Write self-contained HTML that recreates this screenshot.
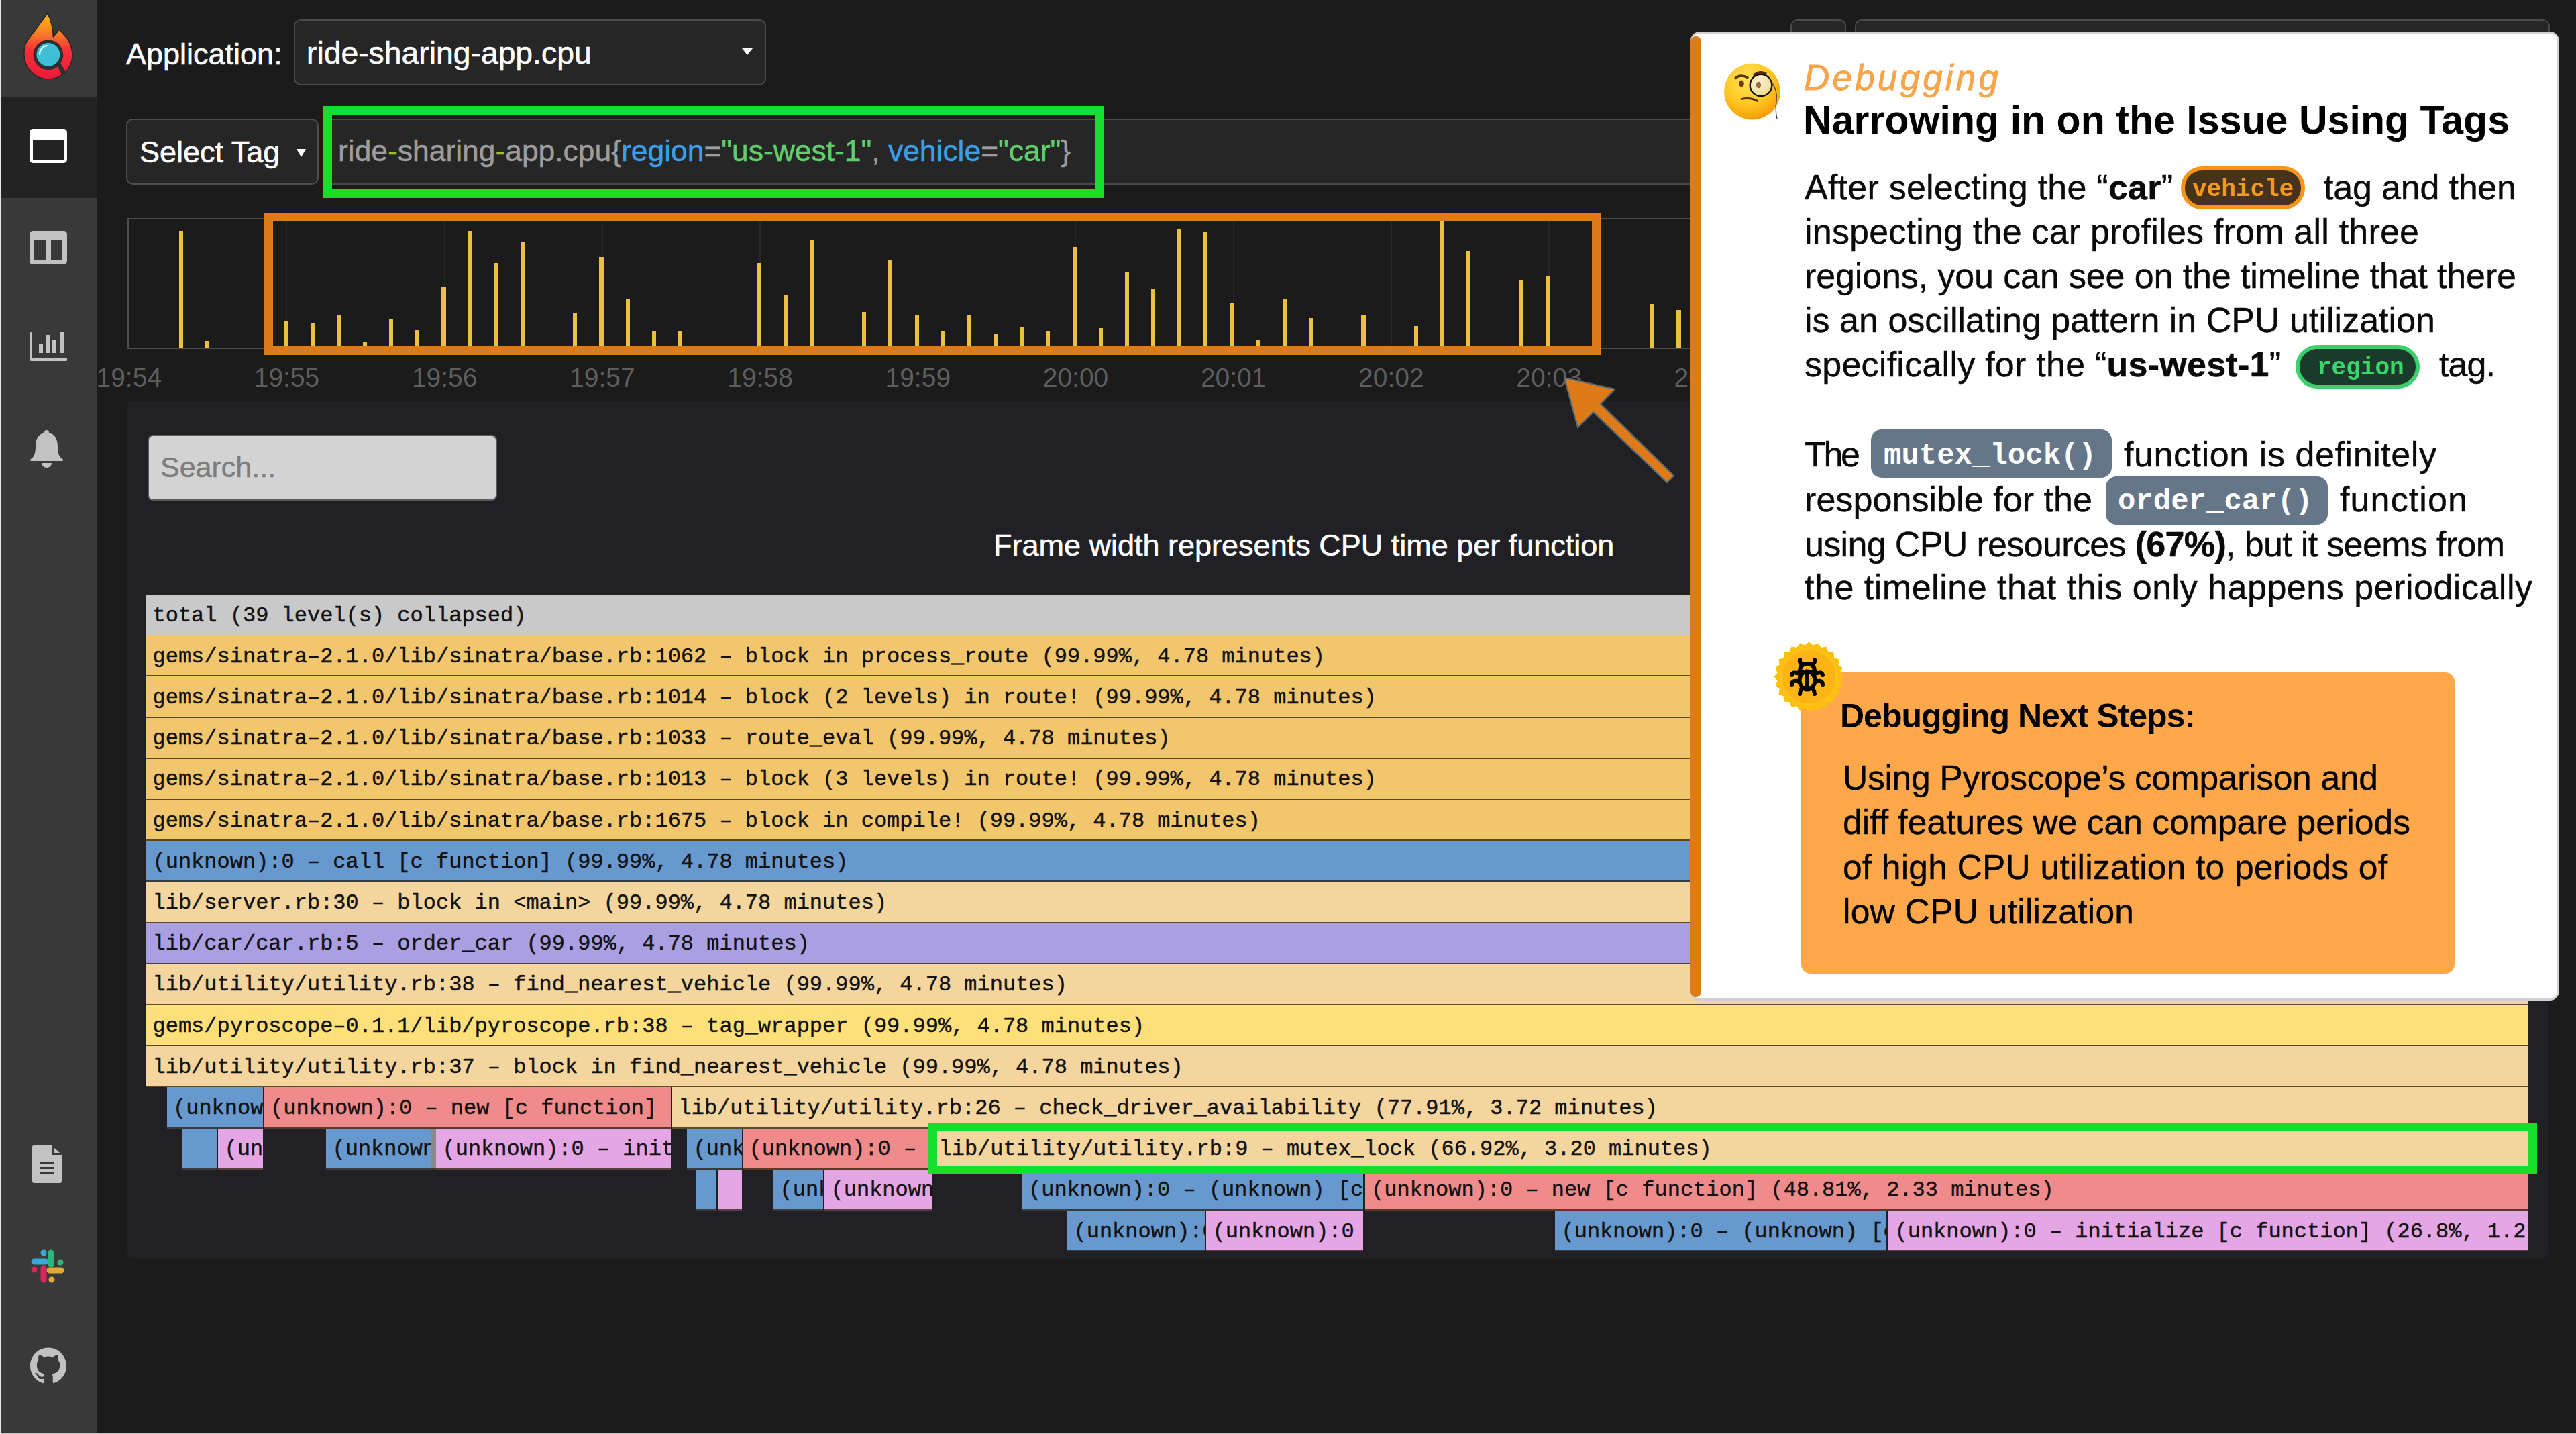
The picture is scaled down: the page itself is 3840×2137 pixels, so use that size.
<!DOCTYPE html><html><head><meta charset="utf-8"><style>
html,body{margin:0;padding:0;width:3840px;height:2137px;overflow:hidden;background:#1b1b1b;font-family:'Liberation Sans', sans-serif}
b{font-weight:bold}
</style></head><body>
<div style="position:absolute;left:0.0px;top:0.0px;width:144.0px;height:2137.0px;background:#393939"></div><div style="position:absolute;left:0.0px;top:144.0px;width:144.0px;height:151.0px;background:#232323"></div><svg style="position:absolute;left:0;top:0" width="144" height="144" viewBox="0 0 144 144">
<defs><linearGradient id="fl" x1="0" y1="20" x2="0" y2="118" gradientUnits="userSpaceOnUse"><stop offset="0" stop-color="#ffbb10"/><stop offset="0.33" stop-color="#f8772a"/><stop offset="0.55" stop-color="#fc2f38"/><stop offset="1" stop-color="#ec1a3a"/></linearGradient></defs>
<path d="M71 20 L41 60 C37 66 35.5 74 35.9 82 C36.5 102 52 118 72 118 C92 118 108 102 108 82 C108 72 104.5 64 100 57 L88.2 44 L79.4 55 C79 44 76 30 71 20 Z" fill="url(#fl)" stroke="#262626" stroke-width="1.6" stroke-linejoin="round"/>
<circle cx="71.9" cy="81.8" r="22.4" fill="#2f2f2f"/>
<path d="M84 95 L92 112 L97.5 106.5 L88 91 Z" fill="#2f2f2f"/>
<circle cx="71.9" cy="81.3" r="17.4" fill="#3fbfd5"/>
<path d="M59 81 A13 13 0 0 1 70 68" stroke="#eafafd" stroke-width="2.2" fill="none" stroke-linecap="round"/>
</svg><svg style="position:absolute;left:44px;top:192px" width="56" height="51" viewBox="0 0 56 51">
<rect x="0" y="0" width="56" height="51" rx="5" fill="#fff"/><rect x="5" y="17" width="46" height="29" fill="#232323"/></svg><svg style="position:absolute;left:44px;top:344px" width="56" height="50" viewBox="0 0 56 50">
<rect x="0" y="0" width="56" height="50" rx="5" fill="#c2c2c2"/><rect x="7" y="14" width="17" height="29" fill="#393939"/><rect x="32" y="14" width="17" height="29" fill="#393939"/></svg><svg style="position:absolute;left:44px;top:495px" width="56" height="44" viewBox="0 0 56 44">
<path d="M0 2 a2 2 0 0 1 4 0 V38 H54 a2.5 2.5 0 0 1 0 5 H3 a3 3 0 0 1 -3 -3 Z" fill="#c2c2c2"/>
<rect x="14" y="17" width="6" height="14" fill="#c2c2c2"/><rect x="24" y="4" width="6" height="27" fill="#c2c2c2"/><rect x="34" y="11" width="6" height="20" fill="#c2c2c2"/><rect x="45" y="0" width="6" height="31" fill="#c2c2c2"/></svg><svg style="position:absolute;left:45px;top:641px" width="50" height="56" viewBox="0 0 50 56">
<circle cx="24.5" cy="3.5" r="3.5" fill="#c2c2c2"/>
<path d="M24.5 4 C12 4 8 14 8 24 C8 34 6 40 1 43 C-1 44.5 0 46 2 46 H47 C49 46 50 44.5 48 43 C43 40 41 34 41 24 C41 14 37 4 24.5 4 Z" fill="#c2c2c2"/>
<path d="M17 49 a7.5 7 0 0 0 15 0 Z" fill="#c2c2c2"/></svg><svg style="position:absolute;left:48px;top:1707px" width="44" height="56" viewBox="0 0 44 56">
<path d="M2 0 H29 L44 14 V53 a3 3 0 0 1 -3 3 H3 a3 3 0 0 1 -3 -3 V2 a2 2 0 0 1 2 -2 Z" fill="#c2c2c2"/>
<path d="M29 0 V12 a2 2 0 0 0 2 2 H44" fill="#393939"/><path d="M32 3 V11 H41 Z" fill="#c2c2c2"/>
<rect x="11" y="25" width="22" height="3" fill="#393939"/><rect x="11" y="32" width="22" height="3" fill="#393939"/><rect x="11" y="39" width="22" height="3" fill="#393939"/></svg><svg style="position:absolute;left:46px;top:1862px" width="50" height="50" viewBox="0 0 50 50">
<g stroke-linecap="round" stroke-width="9" fill="none">
<line x1="5" y1="18" x2="22" y2="18" stroke="#36a9d6"/><line x1="19" y1="5" x2="19" y2="5" stroke="#36a9d6"/>
<line x1="30" y1="5" x2="30" y2="22" stroke="#2eb67d"/><line x1="44" y1="19" x2="44" y2="19" stroke="#2eb67d"/>
<line x1="28" y1="31" x2="45" y2="31" stroke="#e0a93a"/><line x1="31" y1="45" x2="31" y2="45" stroke="#e0a93a"/>
<line x1="19" y1="28" x2="19" y2="45" stroke="#d6285a"/><line x1="5" y1="30" x2="5" y2="30" stroke="#d6285a"/>
</g></svg><svg style="position:absolute;left:45px;top:2008px" width="54" height="55" viewBox="0 0 16 16">
<path fill="#c2c2c2" d="M8 0C3.58 0 0 3.58 0 8c0 3.54 2.29 6.53 5.47 7.59.4.07.55-.17.55-.38 0-.19-.01-.82-.01-1.49-2.01.37-2.53-.49-2.69-.94-.09-.23-.48-.94-.82-1.13-.28-.15-.68-.52-.01-.53.63-.01 1.08.58 1.23.82.72 1.21 1.87.87 2.33.66.07-.52.28-.87.51-1.07-1.78-.2-3.64-.89-3.640-3.95 0-.87.31-1.59.82-2.15-.08-.2-.36-1.02.08-2.12 0 0 .67-.21 2.2.82.64-.18 1.32-.27 2-.27.68 0 1.36.09 2 .27 1.53-1.040 2.2-.82 2.2-.82.44 1.1.16 1.92.08 2.12.51.56.82 1.27.82 2.15 0 3.07-1.87 3.75-3.65 3.95.29.25.54.73.54 1.48 0 1.07-.01 1.93-.01 2.2 0 .21.15.46.55.38A8.013 8.013 0 0016 8c0-4.42-3.58-8-8-8z"/></svg><div id="app_lbl" style="position:absolute;left:188.0px;top:57.90px;font-family:'Liberation Sans', sans-serif;font-size:45px;line-height:45px;color:#fff;white-space:pre;-webkit-text-stroke:0.6px #fff;">Application:</div><div style="position:absolute;left:438.0px;top:29.0px;width:704.0px;height:98.0px;background:#262626;border:2px solid #4a4a4a;border-radius:10px;box-sizing:border-box"></div><div style="position:absolute;left:457.0px;top:55.80px;font-family:'Liberation Sans', sans-serif;font-size:46.3px;line-height:46.3px;color:#fff;white-space:pre;-webkit-text-stroke:0.6px #fff;">ride-sharing-app.cpu</div><svg style="position:absolute;left:1106px;top:72px" width="16" height="11"><path d="M0 0 H16 L8 10 Z" fill="#fff"/></svg><div style="position:absolute;left:2669.0px;top:29.0px;width:83.0px;height:91.0px;background:#262626;border:2px solid #4a4a4a;border-radius:10px;box-sizing:border-box"></div><div style="position:absolute;left:2765.0px;top:29.0px;width:1036.0px;height:91.0px;background:#262626;border:2px solid #4a4a4a;border-radius:10px;box-sizing:border-box"></div><div style="position:absolute;left:188.0px;top:177.0px;width:287.0px;height:98.0px;background:#262626;border:2px solid #4e4e4e;border-radius:10px;box-sizing:border-box"></div><div style="position:absolute;left:208.0px;top:203.90px;font-family:'Liberation Sans', sans-serif;font-size:45px;line-height:45px;color:#fff;white-space:pre;-webkit-text-stroke:0.6px #fff;">Select Tag</div><svg style="position:absolute;left:442px;top:222px" width="14" height="12"><path d="M0 0 H14 L7 12 Z" fill="#fff"/></svg><div style="position:absolute;left:484.0px;top:177.0px;width:3317.0px;height:98.0px;background:#262626;border:2px solid #4a4a4a;border-radius:2px;box-sizing:border-box"></div><div style="position:absolute;left:504.0px;top:203.41px;font-family:'Liberation Sans', sans-serif;font-size:44.4px;line-height:44.4px;color:#fff;white-space:pre;-webkit-text-stroke:0.5px currentColor;"><span style="color:#9d9d9d">ride</span><span style="color:#9cbd34">-</span><span style="color:#9d9d9d">sharing</span><span style="color:#9cbd34">-</span><span style="color:#9d9d9d">app.cpu{</span><span style="color:#3b9fe9">region</span><span style="color:#9d9d9d">=</span><span style="color:#62cf6c">"us-west-1"</span><span style="color:#9d9d9d">, </span><span style="color:#3b9fe9">vehicle</span><span style="color:#9d9d9d">=</span><span style="color:#62cf6c">"car"</span><span style="color:#9d9d9d">}</span></div><div style="position:absolute;left:482.0px;top:158.0px;width:1163.0px;height:137.0px;border:13px solid #17dd2c;box-sizing:border-box"></div><div style="position:absolute;left:190.0px;top:325.0px;width:3611.0px;height:195.0px;border:2px solid #4d4d4d;box-sizing:border-box"></div><div style="position:absolute;left:426.8px;top:327.0px;width:1.5px;height:191.0px;background:#262626"></div><div style="position:absolute;left:662.0px;top:327.0px;width:1.5px;height:191.0px;background:#262626"></div><div style="position:absolute;left:897.1px;top:327.0px;width:1.5px;height:191.0px;background:#262626"></div><div style="position:absolute;left:1132.3px;top:327.0px;width:1.5px;height:191.0px;background:#262626"></div><div style="position:absolute;left:1367.5px;top:327.0px;width:1.5px;height:191.0px;background:#262626"></div><div style="position:absolute;left:1602.8px;top:327.0px;width:1.5px;height:191.0px;background:#262626"></div><div style="position:absolute;left:1837.9px;top:327.0px;width:1.5px;height:191.0px;background:#262626"></div><div style="position:absolute;left:2073.1px;top:327.0px;width:1.5px;height:191.0px;background:#262626"></div><div style="position:absolute;left:2308.3px;top:327.0px;width:1.5px;height:191.0px;background:#262626"></div><div style="position:absolute;left:2543.5px;top:327.0px;width:1.5px;height:191.0px;background:#262626"></div><div style="position:absolute;left:2778.8px;top:327.0px;width:1.5px;height:191.0px;background:#262626"></div><div style="position:absolute;left:3013.9px;top:327.0px;width:1.5px;height:191.0px;background:#262626"></div><div style="position:absolute;left:3249.1px;top:327.0px;width:1.5px;height:191.0px;background:#262626"></div><div style="position:absolute;left:3484.3px;top:327.0px;width:1.5px;height:191.0px;background:#262626"></div><div style="position:absolute;left:3719.5px;top:327.0px;width:1.5px;height:191.0px;background:#262626"></div><div style="position:absolute;left:266.7px;top:344.0px;width:6.2px;height:174.0px;background:#eec040"></div><div style="position:absolute;left:305.9px;top:508.0px;width:6.2px;height:10.0px;background:#eec040"></div><div style="position:absolute;left:423.4px;top:478.0px;width:6.2px;height:40.0px;background:#eec040"></div><div style="position:absolute;left:462.6px;top:481.0px;width:6.2px;height:37.0px;background:#eec040"></div><div style="position:absolute;left:501.7px;top:468.6px;width:6.2px;height:49.4px;background:#eec040"></div><div style="position:absolute;left:540.9px;top:509.0px;width:6.2px;height:9.0px;background:#eec040"></div><div style="position:absolute;left:580.1px;top:475.0px;width:6.2px;height:43.0px;background:#eec040"></div><div style="position:absolute;left:619.2px;top:492.0px;width:6.2px;height:26.0px;background:#eec040"></div><div style="position:absolute;left:658.4px;top:427.0px;width:6.2px;height:91.0px;background:#eec040"></div><div style="position:absolute;left:697.6px;top:343.5px;width:6.2px;height:174.5px;background:#eec040"></div><div style="position:absolute;left:736.7px;top:391.6px;width:6.2px;height:126.4px;background:#eec040"></div><div style="position:absolute;left:775.9px;top:361.0px;width:6.2px;height:157.0px;background:#eec040"></div><div style="position:absolute;left:854.3px;top:467.0px;width:6.2px;height:51.0px;background:#eec040"></div><div style="position:absolute;left:893.4px;top:383.0px;width:6.2px;height:135.0px;background:#eec040"></div><div style="position:absolute;left:932.6px;top:444.7px;width:6.2px;height:73.3px;background:#eec040"></div><div style="position:absolute;left:971.8px;top:492.5px;width:6.2px;height:25.5px;background:#eec040"></div><div style="position:absolute;left:1010.9px;top:492.5px;width:6.2px;height:25.5px;background:#eec040"></div><div style="position:absolute;left:1128.4px;top:391.6px;width:6.2px;height:126.4px;background:#eec040"></div><div style="position:absolute;left:1167.6px;top:440.4px;width:6.2px;height:77.6px;background:#eec040"></div><div style="position:absolute;left:1206.8px;top:357.5px;width:6.2px;height:160.5px;background:#eec040"></div><div style="position:absolute;left:1285.1px;top:465.0px;width:6.2px;height:53.0px;background:#eec040"></div><div style="position:absolute;left:1324.3px;top:388.0px;width:6.2px;height:130.0px;background:#eec040"></div><div style="position:absolute;left:1363.5px;top:469.0px;width:6.2px;height:49.0px;background:#eec040"></div><div style="position:absolute;left:1402.6px;top:492.5px;width:6.2px;height:25.5px;background:#eec040"></div><div style="position:absolute;left:1441.8px;top:469.0px;width:6.2px;height:49.0px;background:#eec040"></div><div style="position:absolute;left:1481.0px;top:497.5px;width:6.2px;height:20.5px;background:#eec040"></div><div style="position:absolute;left:1520.1px;top:487.0px;width:6.2px;height:31.0px;background:#eec040"></div><div style="position:absolute;left:1559.3px;top:492.5px;width:6.2px;height:25.5px;background:#eec040"></div><div style="position:absolute;left:1598.5px;top:368.0px;width:6.2px;height:150.0px;background:#eec040"></div><div style="position:absolute;left:1637.7px;top:488.5px;width:6.2px;height:29.5px;background:#eec040"></div><div style="position:absolute;left:1676.8px;top:405.0px;width:6.2px;height:113.0px;background:#eec040"></div><div style="position:absolute;left:1716.0px;top:431.0px;width:6.2px;height:87.0px;background:#eec040"></div><div style="position:absolute;left:1755.2px;top:341.0px;width:6.2px;height:177.0px;background:#eec040"></div><div style="position:absolute;left:1794.3px;top:345.0px;width:6.2px;height:173.0px;background:#eec040"></div><div style="position:absolute;left:1833.5px;top:451.0px;width:6.2px;height:67.0px;background:#eec040"></div><div style="position:absolute;left:1872.7px;top:506.0px;width:6.2px;height:12.0px;background:#eec040"></div><div style="position:absolute;left:1911.8px;top:445.0px;width:6.2px;height:73.0px;background:#eec040"></div><div style="position:absolute;left:1951.0px;top:474.0px;width:6.2px;height:44.0px;background:#eec040"></div><div style="position:absolute;left:2029.4px;top:469.0px;width:6.2px;height:49.0px;background:#eec040"></div><div style="position:absolute;left:2107.7px;top:486.0px;width:6.2px;height:32.0px;background:#eec040"></div><div style="position:absolute;left:2146.9px;top:330.0px;width:6.2px;height:188.0px;background:#eec040"></div><div style="position:absolute;left:2186.0px;top:373.6px;width:6.2px;height:144.4px;background:#eec040"></div><div style="position:absolute;left:2264.4px;top:417.0px;width:6.2px;height:101.0px;background:#eec040"></div><div style="position:absolute;left:2303.5px;top:411.0px;width:6.2px;height:107.0px;background:#eec040"></div><div style="position:absolute;left:2460.2px;top:452.8px;width:6.2px;height:65.2px;background:#eec040"></div><div style="position:absolute;left:2499.4px;top:462.0px;width:6.2px;height:56.0px;background:#eec040"></div><div style="position:absolute;left:92.3px;top:543.0px;width:200px;text-align:center;font-family:'Liberation Sans', sans-serif;font-size:39px;line-height:39px;color:#5e5e5e">19:54</div><div style="position:absolute;left:327.5px;top:543.0px;width:200px;text-align:center;font-family:'Liberation Sans', sans-serif;font-size:39px;line-height:39px;color:#5e5e5e">19:55</div><div style="position:absolute;left:562.7px;top:543.0px;width:200px;text-align:center;font-family:'Liberation Sans', sans-serif;font-size:39px;line-height:39px;color:#5e5e5e">19:56</div><div style="position:absolute;left:797.9px;top:543.0px;width:200px;text-align:center;font-family:'Liberation Sans', sans-serif;font-size:39px;line-height:39px;color:#5e5e5e">19:57</div><div style="position:absolute;left:1033.1px;top:543.0px;width:200px;text-align:center;font-family:'Liberation Sans', sans-serif;font-size:39px;line-height:39px;color:#5e5e5e">19:58</div><div style="position:absolute;left:1268.3px;top:543.0px;width:200px;text-align:center;font-family:'Liberation Sans', sans-serif;font-size:39px;line-height:39px;color:#5e5e5e">19:59</div><div style="position:absolute;left:1503.5px;top:543.0px;width:200px;text-align:center;font-family:'Liberation Sans', sans-serif;font-size:39px;line-height:39px;color:#5e5e5e">20:00</div><div style="position:absolute;left:1738.7px;top:543.0px;width:200px;text-align:center;font-family:'Liberation Sans', sans-serif;font-size:39px;line-height:39px;color:#5e5e5e">20:01</div><div style="position:absolute;left:1973.9px;top:543.0px;width:200px;text-align:center;font-family:'Liberation Sans', sans-serif;font-size:39px;line-height:39px;color:#5e5e5e">20:02</div><div style="position:absolute;left:2209.1px;top:543.0px;width:200px;text-align:center;font-family:'Liberation Sans', sans-serif;font-size:39px;line-height:39px;color:#5e5e5e">20:03</div><div style="position:absolute;left:2444.3px;top:543.0px;width:200px;text-align:center;font-family:'Liberation Sans', sans-serif;font-size:39px;line-height:39px;color:#5e5e5e">20:04</div><div style="position:absolute;left:2679.5px;top:543.0px;width:200px;text-align:center;font-family:'Liberation Sans', sans-serif;font-size:39px;line-height:39px;color:#5e5e5e">20:05</div><div style="position:absolute;left:394.0px;top:317.0px;width:1992.0px;height:212.0px;border:13.5px solid #df7a19;box-sizing:border-box"></div><div style="position:absolute;left:190.0px;top:597.0px;width:3608.0px;height:1278.0px;background:#212125;border-radius:8px"></div><div style="position:absolute;left:220.0px;top:648.0px;width:521.0px;height:98.0px;background:#d3d3d3;border:2px solid #5a5a5a;border-radius:8px;box-sizing:border-box"></div><div style="position:absolute;left:239.0px;top:674.59px;font-family:'Liberation Sans', sans-serif;font-size:43px;line-height:43px;color:#7d7d7d;white-space:pre;-webkit-text-stroke:0.5px #7d7d7d;">Search...</div><div style="position:absolute;left:1481.0px;top:789.90px;font-family:'Liberation Sans', sans-serif;font-size:45px;line-height:45px;color:#fff;white-space:pre;-webkit-text-stroke:0.6px #fff;">Frame width represents CPU time per function</div><div style="position:absolute;left:218.0px;top:886.0px;width:3550.0px;height:61.2px;background:#c9c9c9;overflow:hidden;box-sizing:border-box"><div style="position:absolute;left:9.5px;top:15.5px;font-family:'Liberation Mono', monospace;font-size:32px;line-height:32px;color:#111;white-space:pre;-webkit-text-stroke:0.45px #111">total (39 level(s) collapsed)</div></div><div style="position:absolute;left:218.0px;top:947.2px;width:3550.0px;height:61.2px;background:#f2c66d;box-shadow:inset 0 -2px 0 rgba(40,30,10,0.75);overflow:hidden;box-sizing:border-box"><div style="position:absolute;left:9.5px;top:15.5px;font-family:'Liberation Mono', monospace;font-size:32px;line-height:32px;color:#111;white-space:pre;-webkit-text-stroke:0.45px #111">gems/sinatra–2.1.0/lib/sinatra/base.rb:1062 – block in process_route (99.99%, 4.78 minutes)</div></div><div style="position:absolute;left:218.0px;top:1008.4px;width:3550.0px;height:61.2px;background:#f2c66d;box-shadow:inset 0 -2px 0 rgba(40,30,10,0.75);overflow:hidden;box-sizing:border-box"><div style="position:absolute;left:9.5px;top:15.5px;font-family:'Liberation Mono', monospace;font-size:32px;line-height:32px;color:#111;white-space:pre;-webkit-text-stroke:0.45px #111">gems/sinatra–2.1.0/lib/sinatra/base.rb:1014 – block (2 levels) in route! (99.99%, 4.78 minutes)</div></div><div style="position:absolute;left:218.0px;top:1069.6px;width:3550.0px;height:61.2px;background:#f2c66d;box-shadow:inset 0 -2px 0 rgba(40,30,10,0.75);overflow:hidden;box-sizing:border-box"><div style="position:absolute;left:9.5px;top:15.5px;font-family:'Liberation Mono', monospace;font-size:32px;line-height:32px;color:#111;white-space:pre;-webkit-text-stroke:0.45px #111">gems/sinatra–2.1.0/lib/sinatra/base.rb:1033 – route_eval (99.99%, 4.78 minutes)</div></div><div style="position:absolute;left:218.0px;top:1130.8px;width:3550.0px;height:61.2px;background:#f2c66d;box-shadow:inset 0 -2px 0 rgba(40,30,10,0.75);overflow:hidden;box-sizing:border-box"><div style="position:absolute;left:9.5px;top:15.5px;font-family:'Liberation Mono', monospace;font-size:32px;line-height:32px;color:#111;white-space:pre;-webkit-text-stroke:0.45px #111">gems/sinatra–2.1.0/lib/sinatra/base.rb:1013 – block (3 levels) in route! (99.99%, 4.78 minutes)</div></div><div style="position:absolute;left:218.0px;top:1192.0px;width:3550.0px;height:61.2px;background:#f2c66d;box-shadow:inset 0 -2px 0 rgba(40,30,10,0.75);overflow:hidden;box-sizing:border-box"><div style="position:absolute;left:9.5px;top:15.5px;font-family:'Liberation Mono', monospace;font-size:32px;line-height:32px;color:#111;white-space:pre;-webkit-text-stroke:0.45px #111">gems/sinatra–2.1.0/lib/sinatra/base.rb:1675 – block in compile! (99.99%, 4.78 minutes)</div></div><div style="position:absolute;left:218.0px;top:1253.2px;width:3550.0px;height:61.2px;background:#6899ce;box-shadow:inset 0 -2px 0 rgba(40,30,10,0.75);overflow:hidden;box-sizing:border-box"><div style="position:absolute;left:9.5px;top:15.5px;font-family:'Liberation Mono', monospace;font-size:32px;line-height:32px;color:#111;white-space:pre;-webkit-text-stroke:0.45px #111">(unknown):0 – call [c function] (99.99%, 4.78 minutes)</div></div><div style="position:absolute;left:218.0px;top:1314.4px;width:3550.0px;height:61.2px;background:#f3d59d;box-shadow:inset 0 -2px 0 rgba(40,30,10,0.75);overflow:hidden;box-sizing:border-box"><div style="position:absolute;left:9.5px;top:15.5px;font-family:'Liberation Mono', monospace;font-size:32px;line-height:32px;color:#111;white-space:pre;-webkit-text-stroke:0.45px #111">lib/server.rb:30 – block in &lt;main&gt; (99.99%, 4.78 minutes)</div></div><div style="position:absolute;left:218.0px;top:1375.6px;width:3550.0px;height:61.2px;background:#aa9fe0;box-shadow:inset 0 -2px 0 rgba(40,30,10,0.75);overflow:hidden;box-sizing:border-box"><div style="position:absolute;left:9.5px;top:15.5px;font-family:'Liberation Mono', monospace;font-size:32px;line-height:32px;color:#111;white-space:pre;-webkit-text-stroke:0.45px #111">lib/car/car.rb:5 – order_car (99.99%, 4.78 minutes)</div></div><div style="position:absolute;left:218.0px;top:1436.8px;width:3550.0px;height:61.2px;background:#f3d59d;box-shadow:inset 0 -2px 0 rgba(40,30,10,0.75);overflow:hidden;box-sizing:border-box"><div style="position:absolute;left:9.5px;top:15.5px;font-family:'Liberation Mono', monospace;font-size:32px;line-height:32px;color:#111;white-space:pre;-webkit-text-stroke:0.45px #111">lib/utility/utility.rb:38 – find_nearest_vehicle (99.99%, 4.78 minutes)</div></div><div style="position:absolute;left:218.0px;top:1498.0px;width:3550.0px;height:61.2px;background:#fde07a;box-shadow:inset 0 -2px 0 rgba(40,30,10,0.75);overflow:hidden;box-sizing:border-box"><div style="position:absolute;left:9.5px;top:15.5px;font-family:'Liberation Mono', monospace;font-size:32px;line-height:32px;color:#111;white-space:pre;-webkit-text-stroke:0.45px #111">gems/pyroscope–0.1.1/lib/pyroscope.rb:38 – tag_wrapper (99.99%, 4.78 minutes)</div></div><div style="position:absolute;left:218.0px;top:1559.2px;width:3550.0px;height:61.2px;background:#f3d59d;box-shadow:inset 0 -2px 0 rgba(40,30,10,0.75);overflow:hidden;box-sizing:border-box"><div style="position:absolute;left:9.5px;top:15.5px;font-family:'Liberation Mono', monospace;font-size:32px;line-height:32px;color:#111;white-space:pre;-webkit-text-stroke:0.45px #111">lib/utility/utility.rb:37 – block in find_nearest_vehicle (99.99%, 4.78 minutes)</div></div><div style="position:absolute;left:248.5px;top:1620.4px;width:143.5px;height:61.2px;background:#6899ce;box-shadow:inset 0 -2px 0 rgba(40,30,10,0.75);overflow:hidden;box-sizing:border-box"><div style="position:absolute;left:9.5px;top:15.5px;font-family:'Liberation Mono', monospace;font-size:32px;line-height:32px;color:#111;white-space:pre;-webkit-text-stroke:0.45px #111">(unknown):0</div></div><div style="position:absolute;left:393.5px;top:1620.4px;width:606.5px;height:61.2px;background:#f08b8b;box-shadow:inset 0 -2px 0 rgba(40,30,10,0.75);overflow:hidden;box-sizing:border-box"><div style="position:absolute;left:9.5px;top:15.5px;font-family:'Liberation Mono', monospace;font-size:32px;line-height:32px;color:#111;white-space:pre;-webkit-text-stroke:0.45px #111">(unknown):0 – new [c function]</div></div><div style="position:absolute;left:1002.0px;top:1620.4px;width:2766.0px;height:61.2px;background:#f3d59d;box-shadow:inset 0 -2px 0 rgba(40,30,10,0.75);overflow:hidden;box-sizing:border-box"><div style="position:absolute;left:9.5px;top:15.5px;font-family:'Liberation Mono', monospace;font-size:32px;line-height:32px;color:#111;white-space:pre;-webkit-text-stroke:0.45px #111">lib/utility/utility.rb:26 – check_driver_availability (77.91%, 3.72 minutes)</div></div><div style="position:absolute;left:271.0px;top:1681.6px;width:52.0px;height:61.2px;background:#6899ce;box-shadow:inset 0 -2px 0 rgba(40,30,10,0.75);overflow:hidden;box-sizing:border-box"><div style="position:absolute;left:9.5px;top:15.5px;font-family:'Liberation Mono', monospace;font-size:32px;line-height:32px;color:#111;white-space:pre;-webkit-text-stroke:0.45px #111"></div></div><div style="position:absolute;left:325.0px;top:1681.6px;width:67.0px;height:61.2px;background:#e5a6e6;box-shadow:inset 0 -2px 0 rgba(40,30,10,0.75);overflow:hidden;box-sizing:border-box"><div style="position:absolute;left:9.5px;top:15.5px;font-family:'Liberation Mono', monospace;font-size:32px;line-height:32px;color:#111;white-space:pre;-webkit-text-stroke:0.45px #111">(unknown)</div></div><div style="position:absolute;left:486.0px;top:1681.6px;width:155.5px;height:61.2px;background:#6899ce;box-shadow:inset 0 -2px 0 rgba(40,30,10,0.75);overflow:hidden;box-sizing:border-box"><div style="position:absolute;left:9.5px;top:15.5px;font-family:'Liberation Mono', monospace;font-size:32px;line-height:32px;color:#111;white-space:pre;-webkit-text-stroke:0.45px #111">(unknown):0</div></div><div style="position:absolute;left:641.5px;top:1681.6px;width:8.5px;height:61.2px;background:#8a8a8a;box-shadow:inset 0 -2px 0 rgba(40,30,10,0.75);overflow:hidden;box-sizing:border-box"><div style="position:absolute;left:9.5px;top:15.5px;font-family:'Liberation Mono', monospace;font-size:32px;line-height:32px;color:#111;white-space:pre;-webkit-text-stroke:0.45px #111"></div></div><div style="position:absolute;left:650.0px;top:1681.6px;width:350.0px;height:61.2px;background:#e5a6e6;box-shadow:inset 0 -2px 0 rgba(40,30,10,0.75);overflow:hidden;box-sizing:border-box"><div style="position:absolute;left:9.5px;top:15.5px;font-family:'Liberation Mono', monospace;font-size:32px;line-height:32px;color:#111;white-space:pre;-webkit-text-stroke:0.45px #111">(unknown):0 – initialize</div></div><div style="position:absolute;left:1024.0px;top:1681.6px;width:81.5px;height:61.2px;background:#6899ce;box-shadow:inset 0 -2px 0 rgba(40,30,10,0.75);overflow:hidden;box-sizing:border-box"><div style="position:absolute;left:9.5px;top:15.5px;font-family:'Liberation Mono', monospace;font-size:32px;line-height:32px;color:#111;white-space:pre;-webkit-text-stroke:0.45px #111">(unknown)</div></div><div style="position:absolute;left:1107.0px;top:1681.6px;width:278.0px;height:61.2px;background:#f08b8b;box-shadow:inset 0 -2px 0 rgba(40,30,10,0.75);overflow:hidden;box-sizing:border-box"><div style="position:absolute;left:9.5px;top:15.5px;font-family:'Liberation Mono', monospace;font-size:32px;line-height:32px;color:#111;white-space:pre;-webkit-text-stroke:0.45px #111">(unknown):0 – new</div></div><div style="position:absolute;left:1390.0px;top:1681.6px;width:2378.0px;height:61.2px;background:#f3d59d;box-shadow:inset 0 -2px 0 rgba(40,30,10,0.75);overflow:hidden;box-sizing:border-box"><div style="position:absolute;left:9.5px;top:15.5px;font-family:'Liberation Mono', monospace;font-size:32px;line-height:32px;color:#111;white-space:pre;-webkit-text-stroke:0.45px #111">lib/utility/utility.rb:9 – mutex_lock (66.92%, 3.20 minutes)</div></div><div style="position:absolute;left:1037.0px;top:1742.8px;width:31.0px;height:61.2px;background:#6899ce;box-shadow:inset 0 -2px 0 rgba(40,30,10,0.75);overflow:hidden;box-sizing:border-box"><div style="position:absolute;left:9.5px;top:15.5px;font-family:'Liberation Mono', monospace;font-size:32px;line-height:32px;color:#111;white-space:pre;-webkit-text-stroke:0.45px #111"></div></div><div style="position:absolute;left:1070.0px;top:1742.8px;width:35.5px;height:61.2px;background:#e5a6e6;box-shadow:inset 0 -2px 0 rgba(40,30,10,0.75);overflow:hidden;box-sizing:border-box"><div style="position:absolute;left:9.5px;top:15.5px;font-family:'Liberation Mono', monospace;font-size:32px;line-height:32px;color:#111;white-space:pre;-webkit-text-stroke:0.45px #111"></div></div><div style="position:absolute;left:1153.0px;top:1742.8px;width:74.0px;height:61.2px;background:#6899ce;box-shadow:inset 0 -2px 0 rgba(40,30,10,0.75);overflow:hidden;box-sizing:border-box"><div style="position:absolute;left:9.5px;top:15.5px;font-family:'Liberation Mono', monospace;font-size:32px;line-height:32px;color:#111;white-space:pre;-webkit-text-stroke:0.45px #111">(unknown)</div></div><div style="position:absolute;left:1229.0px;top:1742.8px;width:161.0px;height:61.2px;background:#e5a6e6;box-shadow:inset 0 -2px 0 rgba(40,30,10,0.75);overflow:hidden;box-sizing:border-box"><div style="position:absolute;left:9.5px;top:15.5px;font-family:'Liberation Mono', monospace;font-size:32px;line-height:32px;color:#111;white-space:pre;-webkit-text-stroke:0.45px #111">(unknown):0</div></div><div style="position:absolute;left:1523.5px;top:1742.8px;width:508.5px;height:61.2px;background:#6899ce;box-shadow:inset 0 -2px 0 rgba(40,30,10,0.75);overflow:hidden;box-sizing:border-box"><div style="position:absolute;left:9.5px;top:15.5px;font-family:'Liberation Mono', monospace;font-size:32px;line-height:32px;color:#111;white-space:pre;-webkit-text-stroke:0.45px #111">(unknown):0 – (unknown) [c function]</div></div><div style="position:absolute;left:2034.5px;top:1742.8px;width:1733.5px;height:61.2px;background:#f08b8b;box-shadow:inset 0 -2px 0 rgba(40,30,10,0.75);overflow:hidden;box-sizing:border-box"><div style="position:absolute;left:9.5px;top:15.5px;font-family:'Liberation Mono', monospace;font-size:32px;line-height:32px;color:#111;white-space:pre;-webkit-text-stroke:0.45px #111">(unknown):0 – new [c function] (48.81%, 2.33 minutes)</div></div><div style="position:absolute;left:1591.0px;top:1804.0px;width:205.0px;height:61.2px;background:#6899ce;box-shadow:inset 0 -2px 0 rgba(40,30,10,0.75);overflow:hidden;box-sizing:border-box"><div style="position:absolute;left:9.5px;top:15.5px;font-family:'Liberation Mono', monospace;font-size:32px;line-height:32px;color:#111;white-space:pre;-webkit-text-stroke:0.45px #111">(unknown):0 – x</div></div><div style="position:absolute;left:1798.0px;top:1804.0px;width:234.0px;height:61.2px;background:#e5a6e6;box-shadow:inset 0 -2px 0 rgba(40,30,10,0.75);overflow:hidden;box-sizing:border-box"><div style="position:absolute;left:9.5px;top:15.5px;font-family:'Liberation Mono', monospace;font-size:32px;line-height:32px;color:#111;white-space:pre;-webkit-text-stroke:0.45px #111">(unknown):0 – x</div></div><div style="position:absolute;left:2318.0px;top:1804.0px;width:493.0px;height:61.2px;background:#6899ce;box-shadow:inset 0 -2px 0 rgba(40,30,10,0.75);overflow:hidden;box-sizing:border-box"><div style="position:absolute;left:9.5px;top:15.5px;font-family:'Liberation Mono', monospace;font-size:32px;line-height:32px;color:#111;white-space:pre;-webkit-text-stroke:0.45px #111">(unknown):0 – (unknown) [c function]</div></div><div style="position:absolute;left:2815.0px;top:1804.0px;width:953.0px;height:61.2px;background:#e5a6e6;box-shadow:inset 0 -2px 0 rgba(40,30,10,0.75);overflow:hidden;box-sizing:border-box"><div style="position:absolute;left:9.5px;top:15.5px;font-family:'Liberation Mono', monospace;font-size:32px;line-height:32px;color:#111;white-space:pre;-webkit-text-stroke:0.45px #111">(unknown):0 – initialize [c function] (26.8%, 1.2</div></div><div style="position:absolute;left:1384.0px;top:1673.0px;width:2398.0px;height:77.0px;border:13px solid #17dd2c;box-sizing:border-box"></div><svg style="position:absolute;left:0;top:0" width="3840" height="2137"><polygon points="2332,563 2407,580 2386,602 2495,709 2485,719 2375,614 2352,637" fill="#df7a19" stroke="#5b6a72" stroke-width="2.2" stroke-linejoin="miter"/></svg><div style="position:absolute;left:2520px;top:47px;width:1295px;height:1444px;background:#fff;border:3px solid #d2d2d2;border-radius:14px;box-sizing:border-box"></div><div style="position:absolute;left:2520.0px;top:54.0px;width:16.0px;height:1432.0px;background:#df7a19;border-radius:8px"></div><svg style="position:absolute;left:2566px;top:90px" width="92" height="92" viewBox="2566 90 92 92">
<defs><radialGradient id="fg" cx="0.42" cy="0.3" r="0.75"><stop offset="0" stop-color="#ffe45a"/><stop offset="0.55" stop-color="#ffc824"/><stop offset="0.85" stop-color="#f9a80c"/><stop offset="1" stop-color="#f08c06"/></radialGradient>
<radialGradient id="mg" cx="0.4" cy="0.35" r="0.7"><stop offset="0" stop-color="#fbf6e4"/><stop offset="0.7" stop-color="#f2e6b0"/><stop offset="1" stop-color="#e8cf70"/></radialGradient></defs>
<circle cx="2612" cy="136.5" r="42" fill="url(#fg)"/>
<path d="M2587 116.5 Q2594 110 2605 115.5" stroke="#5a2e0a" stroke-width="3.4" fill="none" stroke-linecap="round"/>
<path d="M2615 111.5 Q2623 105 2632 109.5" stroke="#5a2e0a" stroke-width="3.4" fill="none" stroke-linecap="round"/>
<ellipse cx="2596" cy="124.5" rx="3.8" ry="5" fill="#6e3a0e"/>
<circle cx="2625" cy="127" r="16.3" fill="url(#mg)" fill-opacity="0.9" stroke="#111" stroke-width="2.4"/>
<ellipse cx="2621.5" cy="126.5" rx="3.6" ry="4.8" fill="#9c6a3c"/>
<path d="M2596 147.5 Q2609 144.5 2620 150.5" stroke="#5a2e0a" stroke-width="2.8" fill="none" stroke-linecap="round"/>
<path d="M2641 122 Q2650 135 2648 150 Q2646 165 2649 177" stroke="#444" stroke-width="1.4" fill="none"/>
</svg><div id="dbg" style="position:absolute;left:2689.0px;top:88.52px;font-family:'Liberation Sans', sans-serif;font-size:53px;line-height:53px;color:#f6a54b;white-space:pre;letter-spacing:4.201px;font-style:italic;-webkit-text-stroke:0.9px #f6a54b;">Debugging</div><div id="title" style="position:absolute;left:2688.0px;top:150.14px;font-family:'Liberation Sans', sans-serif;font-size:59px;line-height:59px;color:#000;white-space:pre;letter-spacing:0.051px;font-weight:bold;">Narrowing in on the Issue Using Tags</div><div id="l1a" style="position:absolute;left:2690.0px;top:252.57px;font-family:'Liberation Sans', sans-serif;font-size:52px;line-height:52px;color:#0a0a0a;white-space:pre;letter-spacing:0.233px;-webkit-text-stroke:0.45px #0a0a0a;">After selecting the “<b>car</b>”</div><div id="l1b" style="position:absolute;left:3464.0px;top:252.57px;font-family:'Liberation Sans', sans-serif;font-size:52px;line-height:52px;color:#0a0a0a;white-space:pre;letter-spacing:-0.195px;-webkit-text-stroke:0.45px #0a0a0a;">tag and then</div><div id="l2" style="position:absolute;left:2690.0px;top:318.67px;font-family:'Liberation Sans', sans-serif;font-size:52px;line-height:52px;color:#0a0a0a;white-space:pre;letter-spacing:0.206px;-webkit-text-stroke:0.45px #0a0a0a;">inspecting the car profiles from all three</div><div id="l3" style="position:absolute;left:2690.0px;top:384.77px;font-family:'Liberation Sans', sans-serif;font-size:52px;line-height:52px;color:#0a0a0a;white-space:pre;letter-spacing:-0.123px;-webkit-text-stroke:0.45px #0a0a0a;">regions, you can see on the timeline that there</div><div id="l4" style="position:absolute;left:2690.0px;top:450.87px;font-family:'Liberation Sans', sans-serif;font-size:52px;line-height:52px;color:#0a0a0a;white-space:pre;letter-spacing:0.015px;-webkit-text-stroke:0.45px #0a0a0a;">is an oscillating pattern in CPU utilization</div><div id="l5a" style="position:absolute;left:2690.0px;top:516.97px;font-family:'Liberation Sans', sans-serif;font-size:52px;line-height:52px;color:#0a0a0a;white-space:pre;letter-spacing:0.251px;-webkit-text-stroke:0.45px #0a0a0a;">specifically for the “<b>us-west-1</b>”</div><div id="l5b" style="position:absolute;left:3636.0px;top:516.97px;font-family:'Liberation Sans', sans-serif;font-size:52px;line-height:52px;color:#0a0a0a;white-space:pre;letter-spacing:-0.916px;-webkit-text-stroke:0.45px #0a0a0a;">tag.</div><div id="l6a" style="position:absolute;left:2690.0px;top:650.57px;font-family:'Liberation Sans', sans-serif;font-size:52px;line-height:52px;color:#0a0a0a;white-space:pre;letter-spacing:-3.308px;-webkit-text-stroke:0.45px #0a0a0a;">The</div><div id="l6b" style="position:absolute;left:3166.0px;top:650.57px;font-family:'Liberation Sans', sans-serif;font-size:52px;line-height:52px;color:#0a0a0a;white-space:pre;letter-spacing:0.580px;-webkit-text-stroke:0.45px #0a0a0a;">function is definitely</div><div id="l7a" style="position:absolute;left:2690.0px;top:717.57px;font-family:'Liberation Sans', sans-serif;font-size:52px;line-height:52px;color:#0a0a0a;white-space:pre;letter-spacing:0.066px;-webkit-text-stroke:0.45px #0a0a0a;">responsible for the</div><div id="l7b" style="position:absolute;left:3488.0px;top:717.57px;font-family:'Liberation Sans', sans-serif;font-size:52px;line-height:52px;color:#0a0a0a;white-space:pre;letter-spacing:1.124px;-webkit-text-stroke:0.45px #0a0a0a;">function</div><div id="l8" style="position:absolute;left:2690.0px;top:784.97px;font-family:'Liberation Sans', sans-serif;font-size:52px;line-height:52px;color:#0a0a0a;white-space:pre;letter-spacing:-0.655px;-webkit-text-stroke:0.45px #0a0a0a;">using CPU resources <b>(67%)</b>, but it seems from</div><div id="l9" style="position:absolute;left:2690.0px;top:849.47px;font-family:'Liberation Sans', sans-serif;font-size:52px;line-height:52px;color:#0a0a0a;white-space:pre;letter-spacing:0.513px;-webkit-text-stroke:0.45px #0a0a0a;">the timeline that this only happens periodically</div><div style="position:absolute;left:3251.0px;top:248.0px;width:185.0px;height:64.0px;background:#47331b;border:6px solid #f6951c;border-radius:32px;box-sizing:border-box"></div><div style="position:absolute;left:3268.0px;top:265.42px;font-family:'Liberation Mono', monospace;font-size:36px;line-height:36px;color:#f59a1f;white-space:pre;font-weight:bold;">vehicle</div><div style="position:absolute;left:3422.0px;top:514.0px;width:185.0px;height:65.0px;background:#1a3b2b;border:6px solid #3bd06b;border-radius:32.5px;box-sizing:border-box"></div><div style="position:absolute;left:3454.0px;top:531.42px;font-family:'Liberation Mono', monospace;font-size:36px;line-height:36px;color:#3dd46d;white-space:pre;font-weight:bold;">region</div><div style="position:absolute;left:2789.0px;top:640.0px;width:359.0px;height:72.0px;background:#667689;border:0px solid #667689;border-radius:16px;box-sizing:border-box"></div><div style="position:absolute;left:2808.0px;top:657.29px;font-family:'Liberation Mono', monospace;font-size:44px;line-height:44px;color:#fff;white-space:pre;font-weight:bold;">mutex_lock()</div><div style="position:absolute;left:3139.0px;top:710.0px;width:331.0px;height:72.0px;background:#667689;border:0px solid #667689;border-radius:16px;box-sizing:border-box"></div><div style="position:absolute;left:3157.0px;top:725.29px;font-family:'Liberation Mono', monospace;font-size:44px;line-height:44px;color:#fff;white-space:pre;font-weight:bold;">order_car()</div><div style="position:absolute;left:2685.0px;top:1002.0px;width:974.0px;height:449.0px;background:#fea84b;border-radius:14px"></div><div id="nxt" style="position:absolute;left:2743.0px;top:1042.16px;font-family:'Liberation Sans', sans-serif;font-size:50px;line-height:50px;color:#000;white-space:pre;letter-spacing:-1.001px;font-weight:bold;">Debugging Next Steps:</div><div id="b1" style="position:absolute;left:2747.0px;top:1134.31px;font-family:'Liberation Sans', sans-serif;font-size:51.6px;line-height:51.6px;color:#000;white-space:pre;letter-spacing:-0.316px;-webkit-text-stroke:0.45px #0a0a0a;">Using Pyroscope’s comparison and</div><div id="b2" style="position:absolute;left:2747.0px;top:1200.31px;font-family:'Liberation Sans', sans-serif;font-size:51.6px;line-height:51.6px;color:#000;white-space:pre;letter-spacing:0.026px;-webkit-text-stroke:0.45px #0a0a0a;">diff features we can compare periods</div><div id="b3" style="position:absolute;left:2747.0px;top:1266.81px;font-family:'Liberation Sans', sans-serif;font-size:51.6px;line-height:51.6px;color:#000;white-space:pre;letter-spacing:0.170px;-webkit-text-stroke:0.45px #0a0a0a;">of high CPU utilization to periods of</div><div id="b4" style="position:absolute;left:2747.0px;top:1333.31px;font-family:'Liberation Sans', sans-serif;font-size:51.6px;line-height:51.6px;color:#000;white-space:pre;letter-spacing:0.216px;-webkit-text-stroke:0.45px #0a0a0a;">low CPU utilization</div><svg style="position:absolute;left:0;top:0" width="3840" height="2137">
<polygon points="2696.5,956.6 2702.7,961.5 2710.0,958.4 2714.7,964.7 2722.5,963.6 2725.4,970.9 2733.3,971.8 2734.2,979.7 2741.5,982.6 2740.4,990.4 2746.7,995.1 2743.6,1002.4 2748.5,1008.6 2743.6,1014.8 2746.7,1022.1 2740.4,1026.8 2741.5,1034.6 2734.2,1037.5 2733.3,1045.4 2725.4,1046.3 2722.5,1053.6 2714.7,1052.5 2710.0,1058.8 2702.7,1055.7 2696.5,1060.6 2690.3,1055.7 2683.0,1058.8 2678.3,1052.5 2670.5,1053.6 2667.6,1046.3 2659.7,1045.4 2658.8,1037.5 2651.5,1034.6 2652.6,1026.8 2646.3,1022.1 2649.4,1014.8 2644.5,1008.6 2649.4,1002.4 2646.3,995.1 2652.6,990.4 2651.5,982.6 2658.8,979.7 2659.7,971.8 2667.6,970.9 2670.5,963.6 2678.3,964.7 2683.0,958.4 2690.3,961.5" fill="#fcc10f"/>
<circle cx="2696.5" cy="1008.6" r="41" fill="#fdb414" stroke="#fcc52a" stroke-width="1.5"/>
<g stroke="#000" stroke-width="6" fill="none" stroke-linecap="round" stroke-linejoin="round">
<path d="M2683 1001 Q2683 989 2694 989 Q2705 989 2705 1001"/>
<path d="M2686 990 Q2682 987 2683 983"/><path d="M2702 990 Q2706 987 2705 983"/>
<ellipse cx="2694" cy="1014" rx="11.5" ry="13.5"/>
<line x1="2694" y1="1004" x2="2694" y2="1027"/>
<line x1="2682" y1="1001" x2="2706" y2="1001"/>
<path d="M2682 1004 Q2672 1000 2671 1006"/><path d="M2682 1016 Q2671 1012 2671 1021"/><path d="M2686 1026 Q2683 1030 2683 1034"/>
<path d="M2706 1004 Q2716 1000 2717 1006"/><path d="M2706 1016 Q2717 1012 2717 1021"/><path d="M2702 1026 Q2705 1030 2705 1034"/>
</g></svg><div style="position:absolute;left:0.0px;top:0.0px;width:1.0px;height:2137.0px;background:#e6e6e6"></div><div style="position:absolute;left:1.0px;top:0.0px;width:1.0px;height:2137.0px;background:#141414"></div><div style="position:absolute;left:0.0px;top:2135.0px;width:3840.0px;height:1.0px;background:#0a0a0a"></div><div style="position:absolute;left:0.0px;top:2136.0px;width:3840.0px;height:1.0px;background:#c4c4c4"></div>
</body></html>
